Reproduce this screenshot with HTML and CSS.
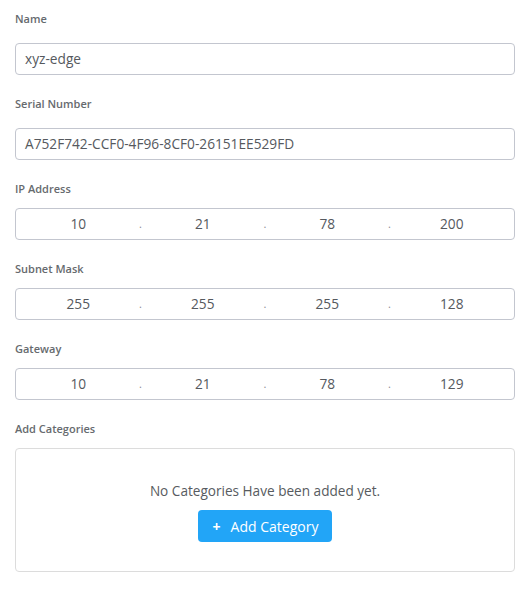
FILE: index.html
```html
<!DOCTYPE html>
<html>
<head>
<meta charset="utf-8">
<link rel="stylesheet" href="styles.css">
</head>
<body>
<form class="form">
  <div class="field">
    <label class="label label-wide">Name</label>
    <div class="input">xyz-edge</div>
  </div>
  <div class="field">
    <label class="label label-wide">Serial Number</label>
    <div class="input">A752F742-CCF0-4F96-8CF0-26151EE529FD</div>
  </div>
  <div class="field">
    <label class="label">IP Address</label>
    <div class="input ip">
      <span class="octet">10</span><span class="dot">.</span>
      <span class="octet">21</span><span class="dot">.</span>
      <span class="octet">78</span><span class="dot">.</span>
      <span class="octet">200</span>
    </div>
  </div>
  <div class="field">
    <label class="label">Subnet Mask</label>
    <div class="input ip">
      <span class="octet">255</span><span class="dot">.</span>
      <span class="octet">255</span><span class="dot">.</span>
      <span class="octet">255</span><span class="dot">.</span>
      <span class="octet">128</span>
    </div>
  </div>
  <div class="field">
    <label class="label">Gateway</label>
    <div class="input ip">
      <span class="octet">10</span><span class="dot">.</span>
      <span class="octet">21</span><span class="dot">.</span>
      <span class="octet">78</span><span class="dot">.</span>
      <span class="octet">129</span>
    </div>
  </div>
  <div class="field">
    <label class="label">Add Categories</label>
    <div class="categories">
      <p class="empty">No Categories Have been added yet.</p>
      <button type="button" class="btn"><span class="plus">+</span>Add Category</button>
    </div>
  </div>
</form>
</body>
</html>
```
FILE: styles.css
```css
html, body {
  margin: 0;
  padding: 0;
  background: #ffffff;
}
body {
  font-family: "Open Sans", "Liberation Sans", sans-serif;
  color: #555a5f;
}
.form {
  padding: 12px 15px 0 15px;
  display: flex;
  flex-direction: column;
  gap: 22px;
}
.field {
  display: flex;
  flex-direction: column;
}
.label {
  font-size: 11px;
  font-weight: 600;
  line-height: 14px;
  color: #666a6e;
  margin-bottom: 12px;
}
.label-wide {
  margin-bottom: 17px;
}
.input {
  box-sizing: border-box;
  height: 32px;
  border: 1px solid #c3c6cf;
  border-radius: 4px;
  padding: 0 9px;
  font-size: 13.7px;
  line-height: 30px;
  color: #55595e;
}
.ip {
  display: flex;
  padding: 0;
}
.octet {
  flex: 1;
  text-align: center;
}
.dot {
  width: 0;
  display: flex;
  justify-content: center;
  color: #8a8e94;
  font-size: 11px;
}
.categories {
  box-sizing: border-box;
  height: 124px;
  border: 1px solid #dcdcdc;
  border-radius: 4px;
  padding: 32px 0 29px;
  display: flex;
  flex-direction: column;
  align-items: center;
  gap: 9px;
}
.empty {
  margin: 0;
  font-size: 13.6px;
  line-height: 20px;
  color: #575b60;
}
.btn {
  height: 32px;
  border: none;
  border-radius: 4px;
  background: #22a5f7;
  color: #ffffff;
  font-family: "Open Sans", "Liberation Sans", sans-serif;
  font-size: 14px;
  padding: 0 14px 0 15px;
  display: flex;
  align-items: center;
  gap: 10px;
  cursor: pointer;
}
.plus {
  font-weight: 700;
  font-size: 14px;
}
```
